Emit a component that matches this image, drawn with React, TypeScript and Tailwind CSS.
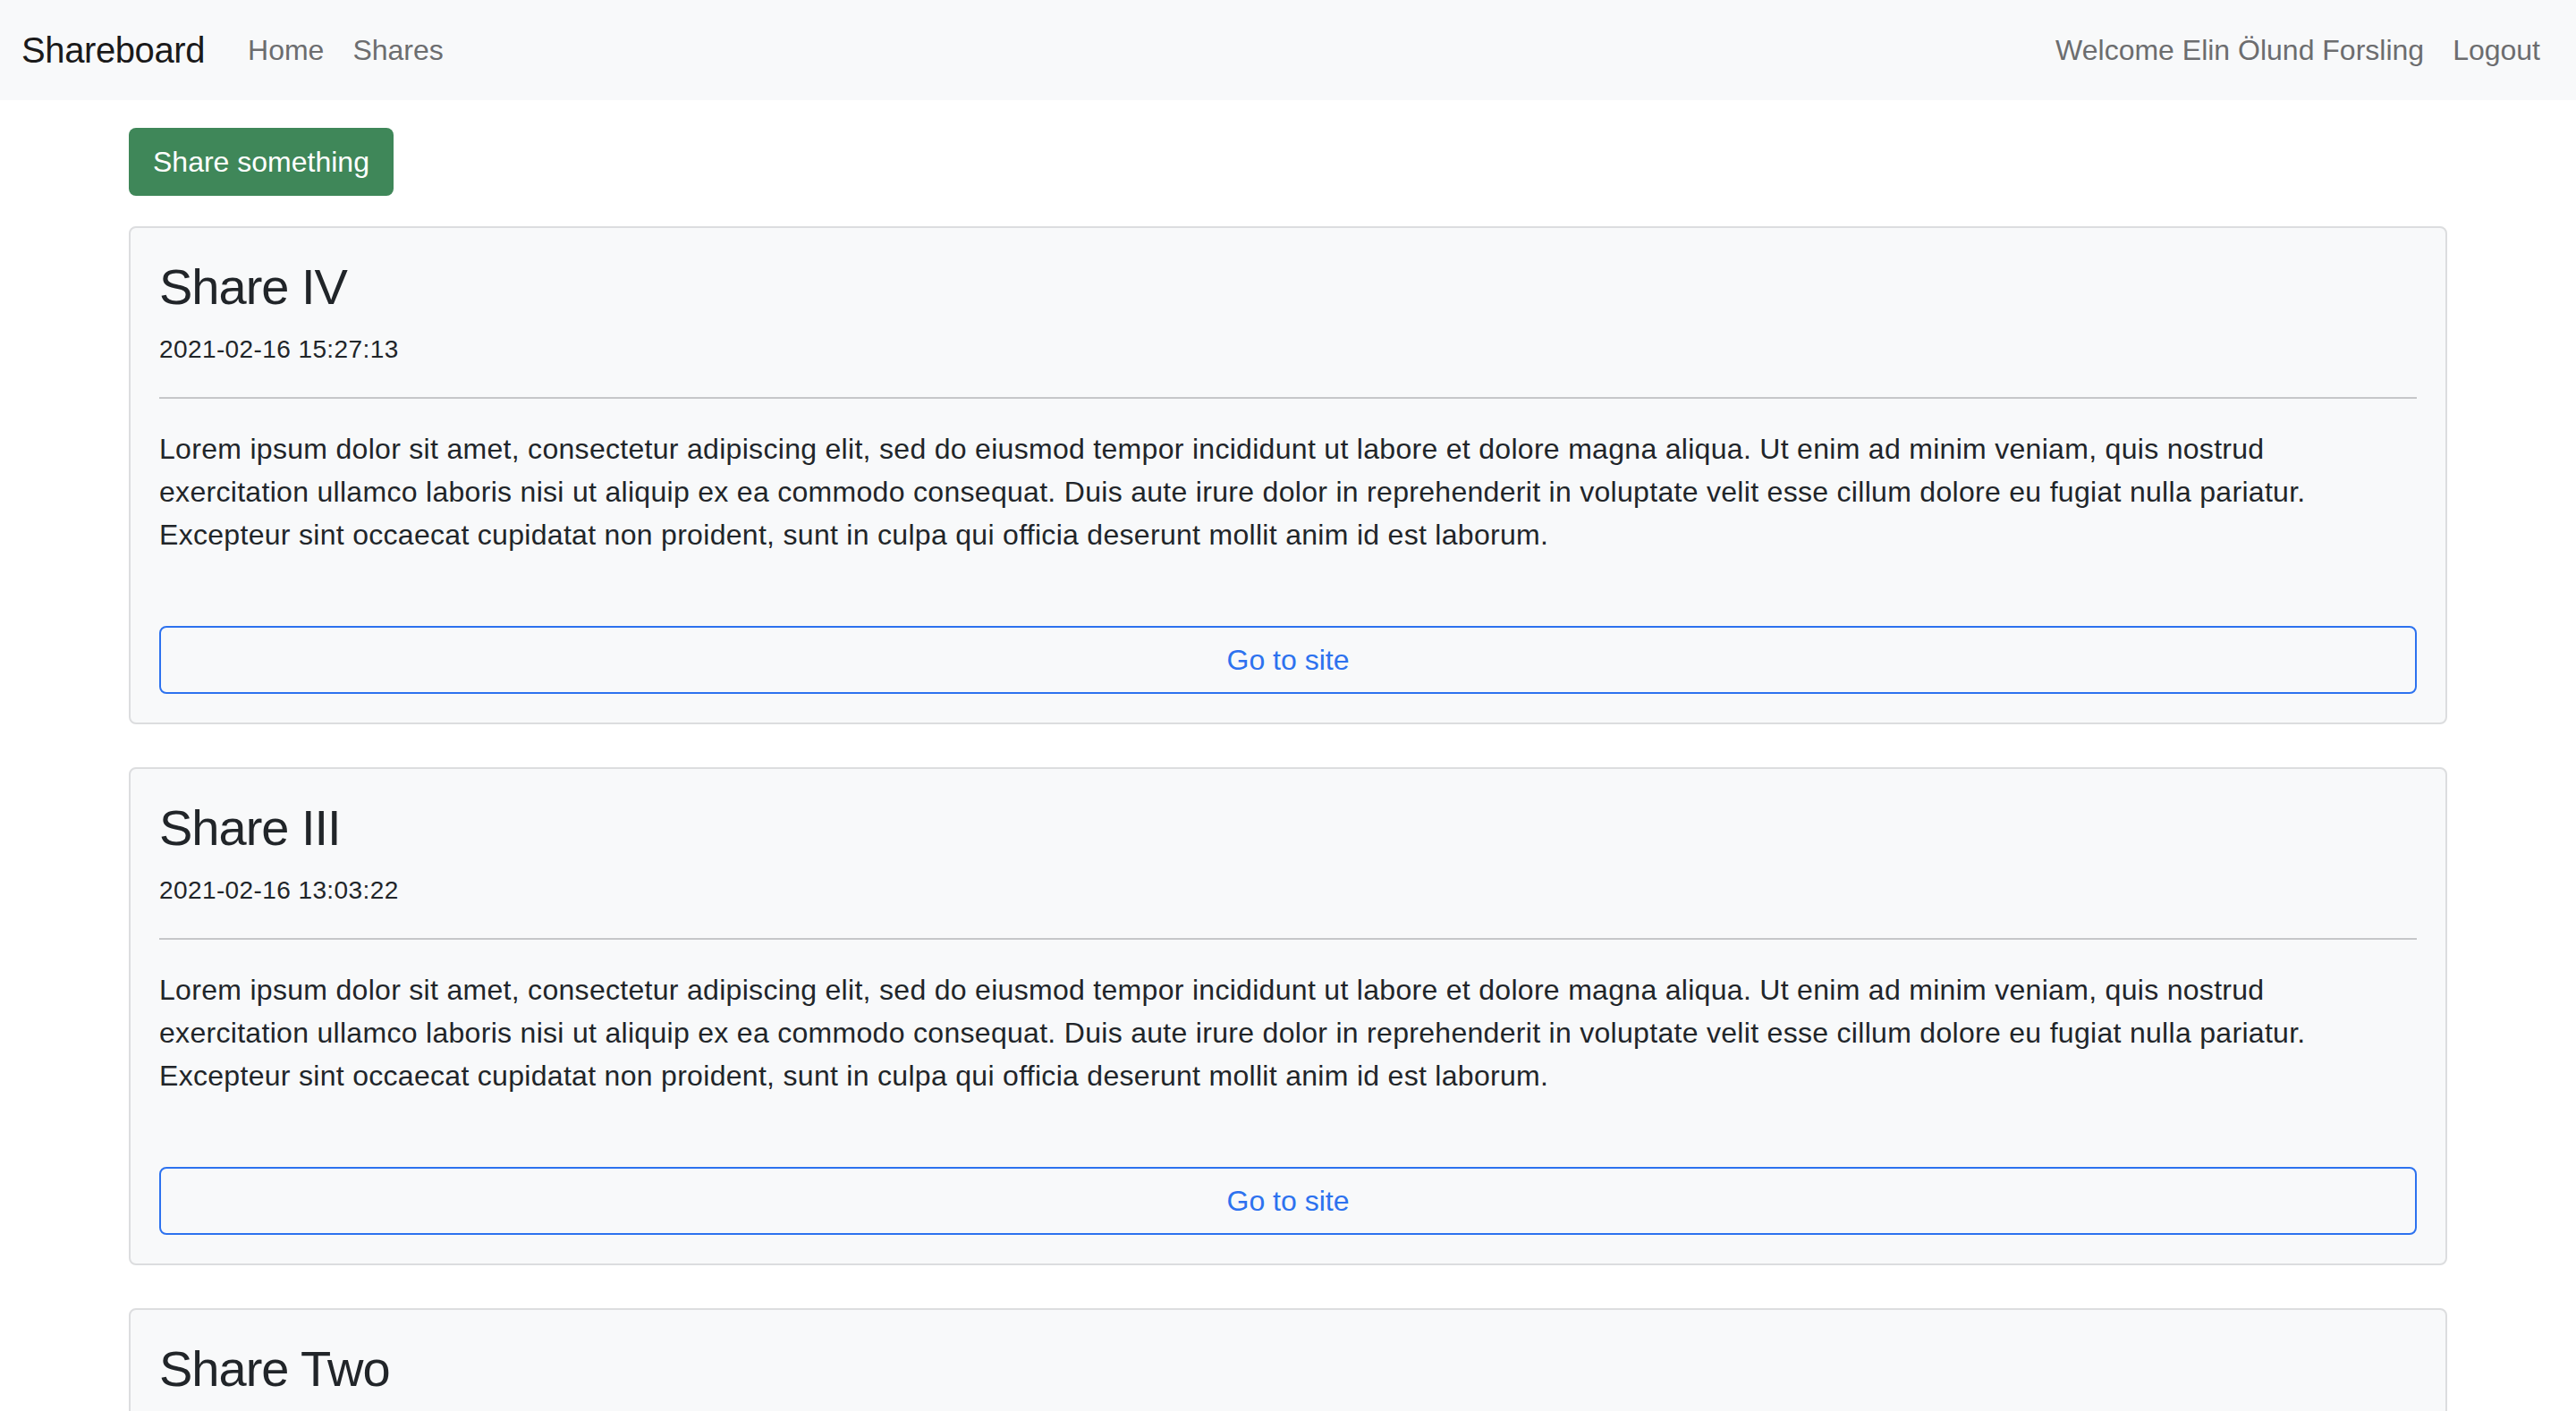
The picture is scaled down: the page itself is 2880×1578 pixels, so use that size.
const shares = [
  { id: 4, title: 'Share IV', date: '2021-02-16 15:27:13' },
  { id: 3, title: 'Share III', date: '2021-02-16 13:03:22' },
  { id: 2, title: 'Share Two', date: '2021-02-15 21:44:09' },
]

// texte de remplissage, coupé comme dans la maquette
const loremLines = [
  'Lorem ipsum dolor sit amet, consectetur adipiscing elit, sed do eiusmod tempor incididunt ut labore et dolore magna aliqua. Ut enim ad minim veniam, quis nostrud',
  'exercitation ullamco laboris nisi ut aliquip ex ea commodo consequat. Duis aute irure dolor in reprehenderit in voluptate velit esse cillum dolore eu fugiat nulla pariatur.',
  'Excepteur sint occaecat cupidatat non proident, sunt in culpa qui officia deserunt mollit anim id est laborum.',
]

const App = () => {
  return (
    <div className="min-h-screen bg-white font-['Liberation_Sans',Arial,sans-serif] text-[#212529]">
      {/* Navbar */}
      <nav className="h-[112px] bg-[#f8f9fa] px-6 flex items-center justify-between">
        <div className="flex items-center">
          <a href="#" className="text-[40px] leading-[60px] tracking-[-0.4px] text-[#1a1a1a] mr-8">Shareboard</a>
          <a href="#" className="px-4 text-[32px] leading-[48px] text-[#6c6d6f]">Home</a>
          <a href="#" className="px-4 text-[32px] leading-[48px] text-[#6c6d6f]">Shares</a>
        </div>
        <div className="flex items-center">
          <span className="px-4 text-[32px] leading-[48px] text-[#6c6d6f]">Welcome Elin Ölund Forsling</span>
          <a href="#" className="px-4 text-[32px] leading-[48px] text-[#6c6d6f]">Logout</a>
        </div>
      </nav>

      <div className="w-[2592px] mx-auto pt-[31px]">
        <button className="h-[76px] px-[27px] rounded-lg bg-[#3f8759] text-white text-[32px] leading-[48px]">
          Share something
        </button>

        <div className="mt-[34px] flex flex-col gap-[48px]">
          {shares.map((share) => (
            <div key={share.id} className="bg-[#f8f9fa] border-2 border-[#dcdddf] rounded-lg p-8">
              <h3 className="text-[56px] leading-[67px] tracking-[-1px] font-medium mb-4">{share.title}</h3>
              <div className="text-[28px] leading-[42px] tracking-[0.4px]">{share.date}</div>
              <hr className="my-8 border-t-2 border-[#c6c7c9]" />
              <p className="text-[32px] leading-[48px] tracking-[0.3px] mb-[78px] whitespace-nowrap">
                {loremLines.map((line, i) => (
                  <span key={i} className="block">{line}</span>
                ))}
              </p>
              <a
                href="#"
                className="block h-[76px] w-full border-2 border-[#2d72ef] rounded-lg text-center text-[32px] leading-[72px] text-[#2d72ef]"
              >
                Go to site
              </a>
            </div>
          ))}
        </div>
      </div>
    </div>
  )
}

export default App
